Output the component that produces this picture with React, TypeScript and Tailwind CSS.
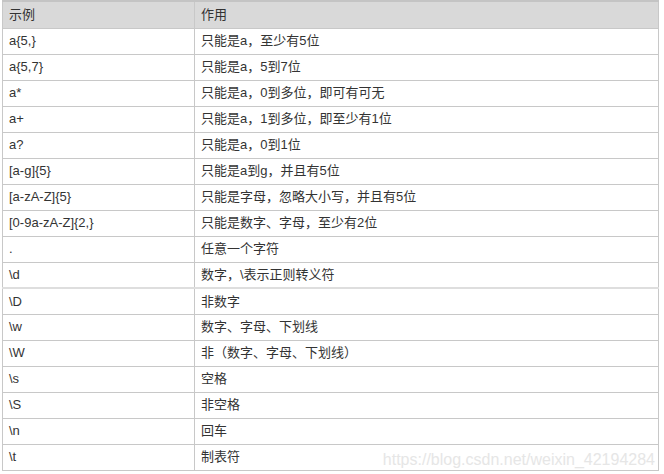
const rows: [string, string][] = [
  ["a{5,}", "只能是a，至少有5位"],
  ["a{5,7}", "只能是a，5到7位"],
  ["a*", "只能是a，0到多位，即可有可无"],
  ["a+", "只能是a，1到多位，即至少有1位"],
  ["a?", "只能是a，0到1位"],
  ["[a-g]{5}", "只能是a到g，并且有5位"],
  ["[a-zA-Z]{5}", "只能是字母，忽略大小写，并且有5位"],
  ["[0-9a-zA-Z]{2,}", "只能是数字、字母，至少有2位"],
  [".", "任意一个字符"],
  ["\\d", "数字，\\表示正则转义符"],
  ["\\D", "非数字"],
  ["\\w", "数字、字母、下划线"],
  ["\\W", "非（数字、字母、下划线）"],
  ["\\s", "空格"],
  ["\\S", "非空格"],
  ["\\n", "回车"],
  ["\\t", "制表符"],
];

export default function App() {
  return (
    <div className="w-[664px] h-[474px] bg-white pl-[2px] font-['Liberation_Sans','Noto_Sans_CJK_SC',sans-serif] text-[13px] text-[#333]">
      <table className="w-[657px] border-collapse table-fixed">
        <colgroup>
          <col className="w-[192px]" />
          <col />
        </colgroup>
        <thead>
          <tr className="h-[27px] bg-[#d9d9d9] border-t-2 border-t-[#c4c4c4]">
            <th className="border border-[#c8c8c8] border-t-[#c4c4c4] px-[6px] text-left font-normal">示例</th>
            <th className="border border-[#c8c8c8] border-t-[#c4c4c4] px-[6px] text-left font-normal">作用</th>
          </tr>
        </thead>
        <tbody>
          {rows.map(([k, v], i) => (
            <tr key={i} className={i === 10 ? "h-[26px] border-t-2 border-t-[#dedede]" : "h-[26px]"}>
              <td className="border border-[#c8c8c8] px-[6px] py-0">{k}</td>
              <td className="relative border border-[#c8c8c8] px-[6px] py-0">
                {v}
                {i === rows.length - 1 && (
                  <span className="absolute right-[3px] top-[3px] text-[16px] text-[#e6e6e6] font-['Liberation_Sans',sans-serif]">
                    https://blog.csdn.net/weixin_42194284
                  </span>
                )}
              </td>
            </tr>
          ))}
        </tbody>
      </table>
    </div>
  );
}
